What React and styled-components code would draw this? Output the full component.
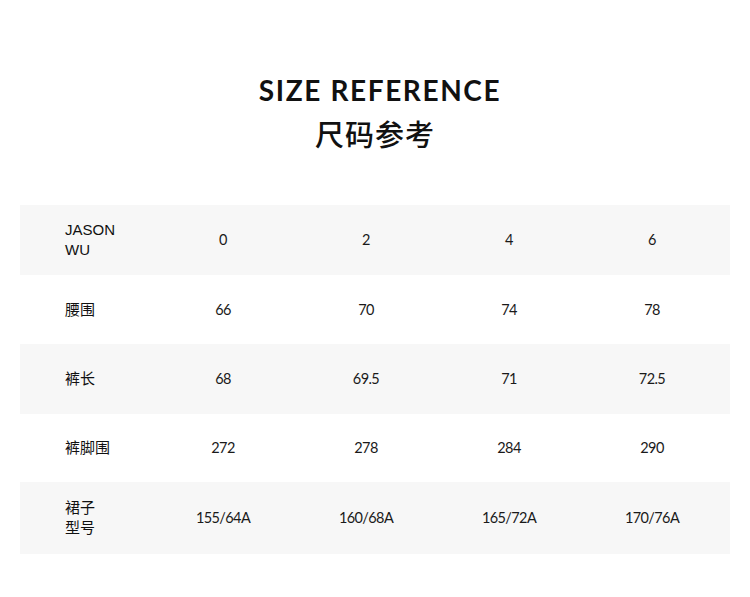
import React from 'react'
import styled, { createGlobalStyle } from 'styled-components'

const GlobalStyle = createGlobalStyle`
  html, body {
    margin: 0;
    padding: 0;
    background: #ffffff;
  }
  body {
    font-family: "Liberation Sans", "Noto Sans CJK SC", sans-serif;
    color: #1a1a1a;
  }
`

const Page = styled.div`
  width: 750px;
  height: 597px;
  background: #fff;
  padding-top: 72px;
  box-sizing: border-box;
`

const Heading = styled.div`
  display: flex;
  flex-direction: column;
  align-items: center;
  margin-bottom: 53px;
`

const TitleEn = styled.h1`
  margin: 0 0 0 10px;
  font-family: "Lato", "Noto Sans", sans-serif;
  font-weight: 700;
  font-size: 28px;
  line-height: 36px;
  letter-spacing: 1.6px;
  color: #111;
`

const TitleCn = styled.h2`
  margin: 6px 0 0;
  font-family: "Noto Sans CJK SC", sans-serif;
  font-weight: 500;
  font-size: 29px;
  line-height: 38px;
  letter-spacing: 1px;
  color: #111;
`

const Table = styled.div`
  margin: 0 20px;
  display: flex;
  flex-direction: column;
`

const Row = styled.div`
  display: grid;
  grid-template-columns: 86.5px repeat(4, 143px);
  align-items: center;
  padding-left: 45px;
  height: ${({ $h }) => $h || 69}px;
  background: ${({ $shade }) => ($shade ? '#f7f7f7' : '#ffffff')};
`

const Label = styled.div`
  font-family: "Liberation Sans", "Noto Sans CJK SC", sans-serif;
  font-size: 15px;
  line-height: 20px;
  color: #111;
  white-space: pre-line;
`

const Cell = styled.div`
  text-align: center;
  font-family: "Lato", "Noto Sans", sans-serif;
  font-size: 14.5px;
  line-height: 20px;
  color: #1a1a1a;
  letter-spacing: -0.6px;
`

const rows = [
  { label: 'JASON\nWU', values: ['0', '2', '4', '6'], h: 70 },
  { label: '腰围', values: ['66', '70', '74', '78'], h: 69 },
  { label: '裤长', values: ['68', '69.5', '71', '72.5'], h: 70 },
  { label: '裤脚围', values: ['272', '278', '284', '290'], h: 68 },
  { label: '裙子\n型号', values: ['155/64A', '160/68A', '165/72A', '170/76A'], h: 72 },
]

export default function App() {
  return (
    <>
      <GlobalStyle />
      <Page>
        <Heading>
          <TitleEn>SIZE REFERENCE</TitleEn>
          <TitleCn>尺码参考</TitleCn>
        </Heading>
        <Table>
          {rows.map((r, i) => (
            <Row key={i} $shade={i % 2 === 0} $h={r.h}>
              <Label>{r.label}</Label>
              {r.values.map((v) => (
                <Cell key={v}>{v}</Cell>
              ))}
            </Row>
          ))}
        </Table>
      </Page>
    </>
  )
}
